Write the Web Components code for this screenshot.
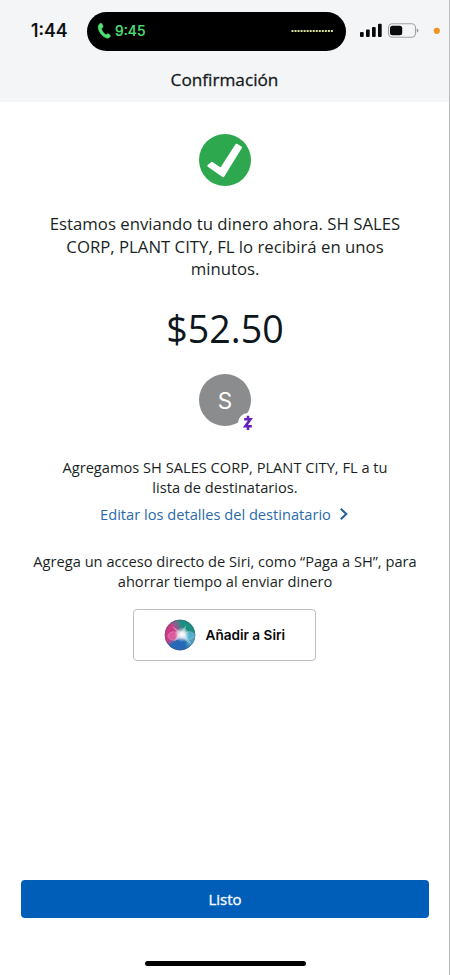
<!DOCTYPE html>
<html lang="es">
<head>
<meta charset="utf-8">
<title>Confirmación</title>
<style>
html,body{margin:0;padding:0;background:#fff}
body{font-family:"Open Sans","Noto Sans",sans-serif;color:#1a1f24}
</style>
</head>
<body>
<confirmation-screen></confirmation-screen>
<script>
function define(name, html) {
  const tpl = document.createElement('template');
  tpl.innerHTML = html;
  customElements.define(name, class extends HTMLElement {
    constructor() {
      super();
      this.attachShadow({ mode: 'open' }).append(tpl.content.cloneNode(true));
    }
  });
}

define('status-bar', `
<style>
:host{display:grid;grid-template-columns:87px 259px 104px;align-items:start;height:62px;font-family:Inter,sans-serif}
.time{padding:20px 0 0 31px;font-size:18px;line-height:22px;font-weight:500;color:#080a0c;-webkit-text-stroke:.2px #080a0c;letter-spacing:0;white-space:nowrap}
.island{margin-top:12px;height:38.5px;border-radius:20px;background:#000;display:flex;align-items:center;box-sizing:border-box;padding:0 13px 0 10px;color:#4fdf73;font-size:13.8px;font-weight:500}
.island span{margin-left:4px;flex:1;-webkit-text-stroke:.2px #4fdf73}
.right{display:block}
svg{display:block}
</style>
<div class="time">1:44</div>
<div class="island">
  <svg width="14" height="18" viewBox="0 0 14 18"><path d="M3 1.6Q4.2.7 5 1.8L6 4Q6.4 5 5.4 5.8L4.8 6.4Q4.3 7 4.8 8Q6 10.5 8 12.2Q8.8 12.9 9.5 12.4L10 12Q10.9 11.3 11.8 12L13.2 13.3Q13.8 14 13.2 14.8Q11.6 17 8.8 15.8Q3.8 13.4 1.7 8Q.1 3.6 3 1.6Z" fill="#4fdf73" stroke="#4fdf73" stroke-width=".5"/></svg>
  <span>9:45</span>
  <svg width="42" height="4" viewBox="0 0 42 4"><path d="M.5 2H42" stroke="#d9df9b" stroke-width="2" stroke-dasharray="2 1.03"/></svg>
</div>
<svg class="right" width="104" height="62" viewBox="346 0 104 62">
  <g fill="#07090b"><rect x="360" y="32" width="3.7" height="5" rx="1"/><rect x="366" y="29.5" width="3.7" height="7.5" rx="1"/><rect x="372" y="27" width="3.7" height="10" rx="1"/><rect x="378" y="23.7" width="3.7" height="13.3" rx="1"/><rect x="390" y="25.7" width="12.2" height="9.6" rx="2.5"/></g>
  <rect x="388.5" y="23.7" width="27" height="13.5" rx="4" fill="none" stroke="#a0a2a5" stroke-width="1.1"/>
  <path d="M416.8 28.2Q418.4 29 418.4 30.4T416.8 32.6Z" fill="#929497"/>
  <circle cx="436.8" cy="30.8" r="3.1" fill="#ef9421"/>
</svg>`);

define('nav-title', `
<style>:host{display:block;height:40px;padding-top:6px;box-sizing:border-box;text-align:center;font-size:17.2px;line-height:24px;color:#15191d;-webkit-text-stroke:.3px #15191d}</style><slot></slot>`);

define('success-mark', `
<style>:host{display:block;width:52px;height:52px}svg{display:block}</style>
<svg width="52" height="52" viewBox="0 0 52 52"><circle cx="26" cy="26" r="26" fill="#2ea84f"/><path d="M9.4 31.9L12.8 29L21.8 35L37.4 10.8L41.9 13.4L24.2 42.2Z" fill="#fff" stroke="#fff" stroke-width="2.2" stroke-linejoin="round"/></svg>`);

define('text-block', `
<style>:host{display:flex;flex-direction:column;align-items:center;white-space:nowrap;text-align:center}</style><slot></slot>`);

define('recipient-avatar', `
<style>
:host{display:block;position:relative;width:52px;height:52px;border-radius:50%;background:#8b8c8e;color:#fff;font:22.5px/54px Inter,sans-serif;text-align:center}
svg{position:absolute;left:39px;top:39px}
</style><slot></slot>
<svg width="20" height="20" viewBox="0 0 20 20"><circle cx="10" cy="10" r="10" fill="#fff"/><path d="M6.1 6.3H12.4L7.4 13.2H13.9M10 2.8V6.3M10 13.2V16.9" fill="none" stroke="#6421bd" stroke-width="2.6"/></svg>`);

define('detail-link', `
<style>:host{display:flex;align-items:center;color:#2a6aa8;white-space:nowrap;gap:8px}svg{display:block}</style>
<span><slot></slot></span><svg width="10" height="14" viewBox="0 0 10 14"><path d="M1.8 1.8L7.3 7L1.8 12.2" fill="none" stroke="#1e5f9e" stroke-width="2"/></svg>`);

define('siri-button', `
<style>
:host{display:flex;box-sizing:border-box;width:183px;height:52px;border:1.2px solid #bdbec0;border-radius:4px;align-items:center;padding-left:29.5px;gap:10px;font:600 13.6px/20px Inter,sans-serif;color:#070809;white-space:nowrap}
svg{display:block;flex:none}
</style>
<svg width="32" height="32" viewBox="0 0 32 32">
<defs>
<clipPath id="c"><circle cx="16" cy="16" r="15.2"/></clipPath>
<filter id="b" x="-50%" y="-50%" width="200%" height="200%"><feGaussianBlur stdDeviation="1.8"/></filter>
<filter id="s" x="-20%" y="-20%" width="140%" height="140%"><feGaussianBlur stdDeviation=".7"/></filter>
<radialGradient id="g"><stop offset="0" stop-color="#fff"/><stop offset=".3" stop-color="#fff" stop-opacity=".85"/><stop offset="1" stop-color="#fff" stop-opacity="0"/></radialGradient>
</defs>
<g clip-path="url(#c)">
<rect width="32" height="32" fill="#45618f"/>
<g filter="url(#b)">
<path d="M12 0H32V15L19 13Z" fill="#1b9080"/>
<path d="M-3 6L9 1L15 14L7 24L-3 24Z" fill="#c93b83"/>
<path d="M4 24L16 18L27 24L20 35H5Z" fill="#2869b6"/>
<path d="M20 15L35 14V22L24 29Z" fill="#4b9fbf"/>
<path d="M6 3L14 2L15 11Z" fill="#80688e"/>
</g>
<g filter="url(#s)"><ellipse cx="9.5" cy="17" rx="5.5" ry="4.2" fill="#f06fac" stroke="#ffa5ce" stroke-width=".8" opacity=".6"/><ellipse cx="25" cy="16.5" rx="5" ry="3.8" fill="#5bbddd" stroke="#9de2ef" stroke-width=".7" opacity=".6"/><path d="M8 7L17 13L22 6L21 15L28 26L18 19L10 22L14 15Z" fill="#fff" opacity=".35"/></g>
<circle cx="18" cy="15.5" r="7.5" fill="url(#g)"/>
</g>
<circle cx="16" cy="16" r="15" fill="none" stroke="#49406d" stroke-opacity=".3" stroke-width=".7"/>
</svg><span><slot></slot></span>`);

define('primary-button', `
<style>:host{display:block;height:38px;border-radius:4px;background:#005eb8;color:#f3f9ff;text-align:center;font-size:15px;line-height:38px;-webkit-text-stroke:.35px #f3f9ff}</style><slot></slot>`);

define('confirmation-screen', `
<style>
:host{display:flex;flex-direction:column;position:relative;width:450px;height:975px;background:#fff;overflow:hidden}
:host::after{content:"";position:absolute;right:0;top:0;bottom:0;width:1px;background:#b9bbbd}
header{height:102px;background:#f4f5f7}
nav-title{width:449px}
main{flex:1;display:flex;flex-direction:column;align-items:center}
success-mark{margin-top:32px}
.sending{margin-top:27px;font-size:16.75px;line-height:22.7px}
.amount{margin-top:19.4px;font-size:37.6px;line-height:56px;color:#0e161d}
recipient-avatar{margin-top:17.5px}
.added{margin-top:31.4px;font-size:14.65px;line-height:20px}
detail-link{margin-top:7px;margin-right:1px;font-size:14.65px;line-height:20px}
.siri{margin-top:26.6px;font-size:14.65px;line-height:20px}
siri-button{margin-top:17.8px;margin-right:1px}
footer{padding:0 21px;height:94.6px;width:408px}
.home{width:161px;height:5px;border-radius:3px;background:#000;margin:43px auto 0}
</style>
<header><status-bar></status-bar><nav-title>Confirmación</nav-title></header>
<main>
<success-mark></success-mark>
<text-block class="sending"><span>Estamos enviando tu dinero ahora. SH SALES</span><span>CORP, PLANT CITY, FL lo recibirá en unos</span><span>minutos.</span></text-block>
<text-block class="amount"><span>$52.50</span></text-block>
<recipient-avatar>S</recipient-avatar>
<text-block class="added"><span>Agregamos SH SALES CORP, PLANT CITY, FL a tu</span><span>lista de destinatarios.</span></text-block>
<detail-link>Editar los detalles del destinatario</detail-link>
<text-block class="siri"><span>Agrega un acceso directo de Siri, como “Paga a SH”, para</span><span>ahorrar tiempo al enviar dinero</span></text-block>
<siri-button>Añadir a Siri</siri-button>
</main>
<footer><primary-button>Listo</primary-button><div class="home"></div></footer>`);
</script>
</body>
</html>
